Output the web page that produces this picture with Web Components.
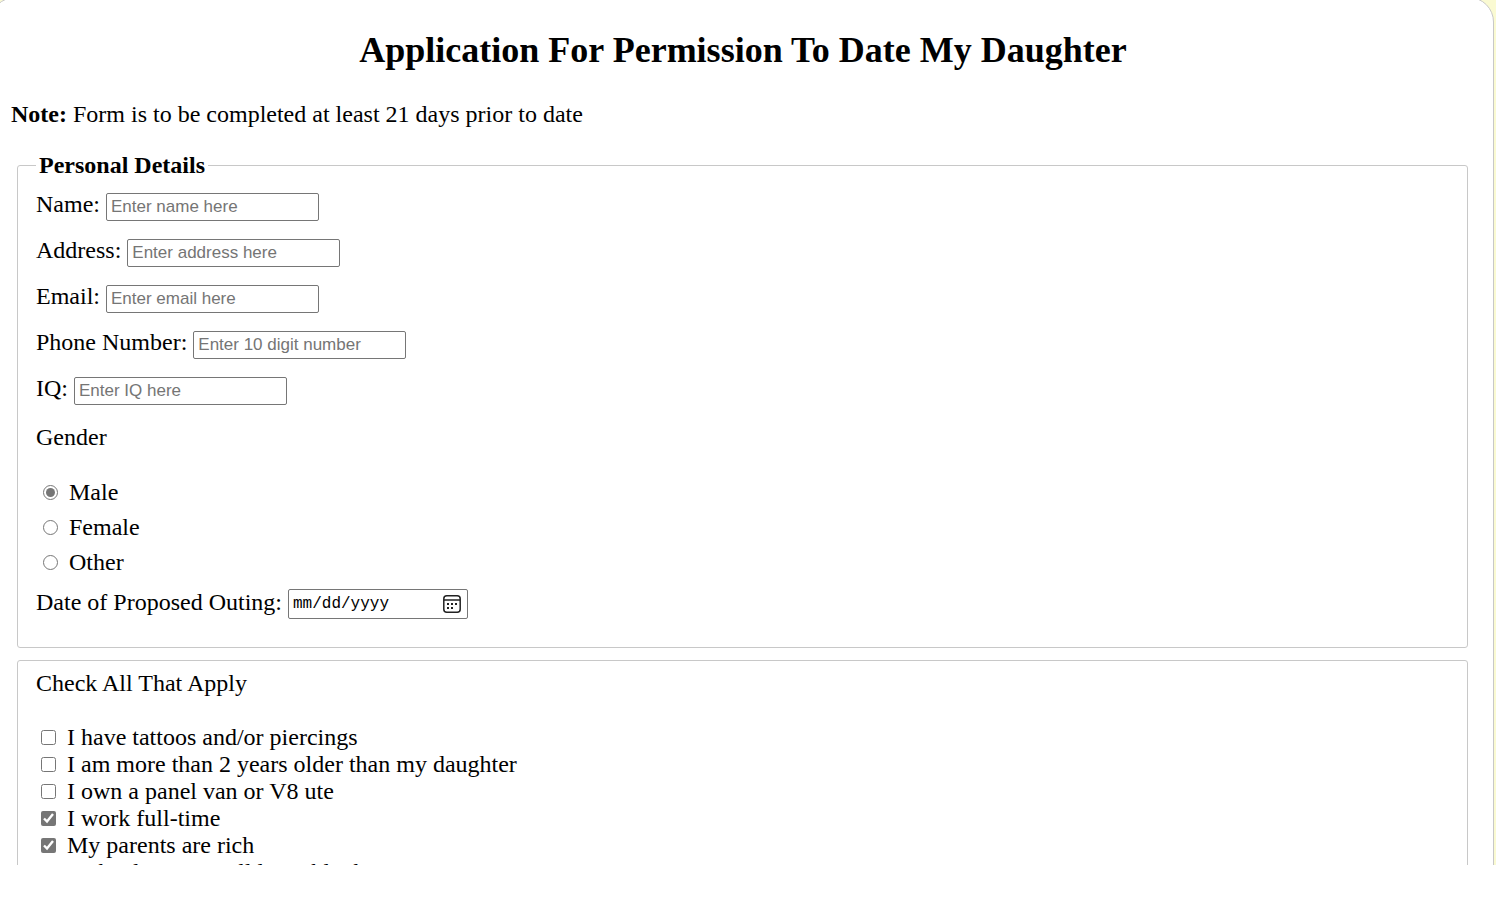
<!DOCTYPE html>
<html lang="en">
<head>
<meta charset="utf-8">
<title>Application For Permission To Date My Daughter</title>
<style>
html, body { height: 100%; }
body { margin: 0; background: #fff; overflow: hidden; font: 24px/27px "Liberation Serif", "Times New Roman", serif; color: #000; }
</style>
</head>
<body>
<application-page>
  <field-group heading="Personal Details">
    <text-field label="Name:" placeholder="Enter name here"></text-field>
    <text-field label="Address:" placeholder="Enter address here"></text-field>
    <text-field label="Email:" type="email" placeholder="Enter email here"></text-field>
    <text-field label="Phone Number:" type="tel" placeholder="Enter 10 digit number"></text-field>
    <text-field label="IQ:" placeholder="Enter IQ here"></text-field>
    <radio-list label="Gender" options="Male|Female|Other" chosen="Male"></radio-list>
    <date-field label="Date of Proposed Outing:"></date-field>
  </field-group>
  <field-group>
    <check-list label="Check All That Apply">
      <check-item>I have tattoos and/or piercings</check-item>
      <check-item>I am more than 2 years older than my daughter</check-item>
      <check-item>I own a panel van or V8 ute</check-item>
      <check-item checked>I work full-time</check-item>
      <check-item checked>My parents are rich</check-item>
      <check-item>I take drugs, or sell lie public housing</check-item>
    </check-list>
  </field-group>
</application-page>
<script>
function define(name, render) {
  customElements.define(name, class extends HTMLElement {
    connectedCallback() {
      if (this.shadowRoot) return;
      this.attachShadow({ mode: "open" }).innerHTML = render(this);
    }
  });
}
const at = (el, name) => el.getAttribute(name) || "";

define("application-page", () => `
  <style>
    :host { display: block; height: calc(100% - 41px); overflow: hidden; background: #fafad2; }
    main { box-sizing: border-box; margin: -3px 2px 0 -10px; min-height: 120%; padding: 0 18px 0 20px; background: #fff; border: 1px solid #c8c8c8; border-radius: 25px; }
    h1 { margin: 31px 0 0; text-align: center; font-size: 36px; line-height: 42px; }
    p { margin: 30px 0 24px; }
    form { display: flex; flex-direction: column; gap: 12px; padding: 0 7px 0 6px; }
  </style>
  <main>
    <h1>Application For Permission To Date My Daughter</h1>
    <p><strong>Note:</strong> Form is to be completed at least 21 days prior to date</p>
    <form><slot></slot></form>
  </main>`);

define("field-group", el => `
  <style>
    :host { display: block; }
    fieldset { margin: 0; min-width: 0; padding: 9px 18px 28px; border: 1px solid #c8c8c8; border-radius: 3px; }
    fieldset.titled { padding-top: 12px; }
    legend { padding: 0 3px; font-weight: bold; }
  </style>
  <fieldset class="${at(el, "heading") ? "titled" : ""}">
    ${at(el, "heading") ? `<legend>${at(el, "heading")}</legend>` : ""}
    <slot></slot>
  </fieldset>`);

define("text-field", el => `
  <style>
    :host { display: flex; align-items: flex-start; gap: 6px; margin-bottom: 16px; }
    input { box-sizing: border-box; width: 213px; height: 28px; margin: 2px 0 0; padding: 1px 4px; border: 1px solid #767676; border-radius: 2px; background: #fff; font: 17px "Liberation Sans", Arial, sans-serif; }
    input::placeholder { color: #757575; }
  </style>
  <label for="box">${at(el, "label")}</label>
  <input id="box" type="${at(el, "type") || "text"}" placeholder="${at(el, "placeholder")}">`);

define("radio-list", el => `
  <style>
    :host { display: block; padding-top: 3px; }
    p { margin: 0 0 24px; }
    label { display: flex; align-items: center; gap: 11px; height: 35px; padding-left: 7px; }
    input { width: 15px; height: 15px; margin: 0; accent-color: #767676; }
  </style>
  <div role="radiogroup" aria-labelledby="title">
    <p id="title">${at(el, "label")}</p>
    ${at(el, "options").split("|").map(o => `<label><input type="radio" name="choice"${o === at(el, "chosen") ? " checked" : ""}>${o}</label>`).join("")}
  </div>`);

define("date-field", el => `
  <style>
    :host { display: flex; align-items: flex-start; gap: 6px; margin-top: 9px; }
    input { box-sizing: border-box; width: 180px; height: 30px; margin: 0; padding: 1px 4px; border: 1px solid #767676; border-radius: 2px; background: #fff; color: #000; font: 16px "Liberation Mono", monospace; }
    input::-webkit-datetime-edit-month-field, input::-webkit-datetime-edit-day-field, input::-webkit-datetime-edit-year-field { padding: 0; }
    input::-webkit-calendar-picker-indicator { width: 18px; height: 18px; padding: 0; margin: 0 2px 0 0; background: url("data:image/svg+xml,%3Csvg xmlns='http://www.w3.org/2000/svg' viewBox='0 0 18 18'%3E%3Crect x='.8' y='.8' width='16.4' height='16.4' rx='3' fill='none' stroke='%23222' stroke-width='1.5'/%3E%3Cpath d='M1 5h16' stroke='%23222' stroke-width='1.3'/%3E%3Cg fill='%23222'%3E%3Crect x='8' y='8' width='2' height='2'/%3E%3Crect x='12' y='8' width='2' height='2'/%3E%3Crect x='4' y='8' width='2' height='2'/%3E%3Crect x='4' y='12' width='2' height='2'/%3E%3Crect x='8' y='12' width='2' height='2'/%3E%3C/g%3E%3C/svg%3E") center / 18px no-repeat; }
  </style>
  <label for="date">${at(el, "label")}</label>
  <input id="date" type="date">`);

define("check-list", el => `
  <style>
    :host { display: block; }
    p { margin: 0 0 27px; }
  </style>
  <div role="group" aria-labelledby="title">
    <p id="title">${at(el, "label")}</p>
    <slot></slot>
  </div>`);

define("check-item", el => `
  <style>
    :host { display: block; }
    label { display: flex; align-items: center; gap: 11px; padding-left: 5px; }
    input { width: 15px; height: 15px; margin: 0; accent-color: #767676; }
  </style>
  <label><input type="checkbox"${el.hasAttribute("checked") ? " checked" : ""}><span><slot></slot></span></label>`);
</script>
</body>
</html>
